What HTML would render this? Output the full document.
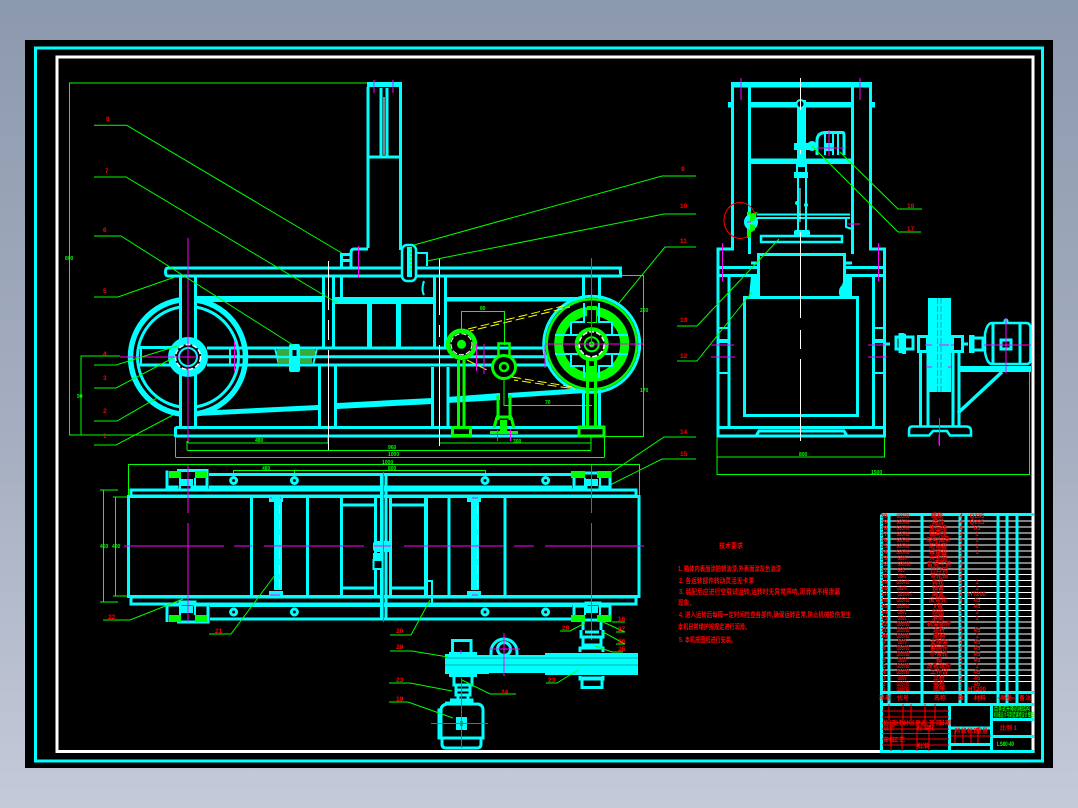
<!DOCTYPE html>
<html lang="zh">
<head>
<meta charset="utf-8">
<title>CAD drawing</title>
<style>
html,body{margin:0;padding:0;width:1078px;height:808px;overflow:hidden;background:linear-gradient(180deg,#8c99ad 0%,#a6afc1 55%,#c5cad9 100%)}
svg{position:absolute;left:0;top:0;display:block}
.c{fill:none;stroke:#0ff;stroke-width:3}
.t{fill:none;stroke:#0ff;stroke-width:2}
.f{fill:#0ff;stroke:none}
.g{fill:none;stroke:#0f0;stroke-width:1}
.l{fill:none;stroke:#0f0;stroke-width:3}
.lf{fill:#0f0;stroke:none}
.m{fill:none;stroke:#f0f;stroke-width:1}
.w{fill:none;stroke:#fff;stroke-width:1}
.y{fill:none;stroke:#ff0;stroke-width:1;stroke-dasharray:9 4}
text{font-family:"Liberation Sans","Noto Sans CJK SC",sans-serif;font-weight:700}
.r{fill:#f00;font-size:6.5px}
.d{fill:#0f0;font-size:5px}
.n{fill:#f00;font-size:7px;font-weight:700}
</style>
</head>
<body>
<svg width="1078" height="808" viewBox="0 0 1078 808" xmlns="http://www.w3.org/2000/svg">
<rect x="25" y="40" width="1028" height="728" fill="#000"/>
<rect x="35.5" y="48" width="1007" height="713" class="c"/>
<rect x="57" y="57" width="976" height="694.5" fill="none" stroke="#fff" stroke-width="3"/>

<!-- FRONT ELEVATION -->
<!-- dims -->
<path class="g" d="M367 83H69.5V435H174M120 356H81V435M188 443H328M188 443V437M328 443V437M440 443H591M187 441V450M187 450.500H591M591 437V450M175.500 457.500H604.500M175.500 437V457M604.500 437V457M620 275.500H643.500V436.500H605M504 367V405.500H592M461.500 344V311.500H504.500V345"/>
<text class="d" x="65" y="260">800</text><text class="d" x="77" y="398">90</text><text class="d" x="255" y="442">480</text><text class="d" x="388" y="449">960</text><text class="d" x="388" y="456">1000</text><text class="d" x="640" y="312">260</text><text class="d" x="640" y="392">170</text><text class="d" x="480" y="310">80</text><text class="d" x="545" y="404">70</text><text class="d" x="513" y="443">300</text>
<!-- column -->
<path class="c" d="M368 248V87M400.500 87V250M367 157H400M381 88V156M387 88V156"/>
<rect x="367" y="82" width="35" height="5" class="f"/>
<path class="c" d="M368 249H354Q351 249 351 253V267M341.500 267V254.500H350M341 260.500H350"/>
<!-- table -->
<path class="c" d="M622 268H168Q165.500 268 165.500 272Q165.500 276 168 276H622Q620.500 276 620.500 272Q620.500 268 618 268"/>
<!-- upper frame legs -->
<path class="c" d="M180.500 277V427M195.500 277V427M323.500 277V347M333.500 277V347M341.500 277V297M583.500 277V300M599.500 277V300"/>
<rect x="197" y="296" width="125" height="6" class="f"/>
<rect x="334" y="297" width="99" height="7" class="f"/>
<rect x="447" y="297" width="136" height="4.500" class="f"/>
<path class="c" d="M369.500 304V347M398.500 304V347"/>
<rect x="367" y="304" width="5" height="43" class="f"/><rect x="396" y="304" width="5" height="43" class="f"/>
<path class="c" d="M434.500 277V347M445.500 277V347"/>
<path class="t" d="M424 281Q421 290 424 295"/>
<!-- big wheel -->
<circle cx="188" cy="357" r="57.500" fill="none" stroke="#0ff" stroke-width="5.500"/>
<circle cx="188" cy="357" r="50.500" fill="none" stroke="#0ff" stroke-width="3"/>
<rect x="182" y="290" width="12" height="135" fill="#000"/>
<path class="c" d="M180.500 277V427M195.500 277V427"/>
<!-- rails -->
<path class="c" d="M207 348H570M207 356.800H576M207 365H570M139 347.500H172M139 365H172"/>
<path class="t" d="M141 347V365M230 348V365M238 348V365"/>
<!-- hub -->
<circle cx="188" cy="357" r="16.500" fill="#000" stroke="#0ff" stroke-width="7"/>
<circle cx="188" cy="357" r="12.500" fill="none" stroke="#fff" stroke-width="1.500" stroke-dasharray="5 2"/>
<circle cx="188" cy="357" r="9" fill="none" stroke="#0ff" stroke-width="2"/>
<!-- key block -->
<path d="M275 348H317L313 365H279Z" fill="#000" stroke="#0ff" stroke-width="2"/>
<path d="M277 349H315V355H277ZM278 358H312V364H278Z" fill="#3aa83a"/>
<path class="c" d="M276 356.800H316" stroke-width="2"/>
<rect x="289" y="344" width="11" height="28" rx="2" class="f"/>
<rect x="292.500" y="350" width="4" height="6" fill="#000"/>
<!-- lower legs -->
<path class="c" d="M319.500 366V427M335.500 366V427M432.500 367V427M448 367V427M583.500 367V427M599.500 367V427"/>
<!-- base -->
<path class="c" d="M175.500 427.500H604M175.500 436H604M175.500 427V437"/>
<!-- slant -->
<path d="M197 411L318 405V410L197 416Z" class="f"/>
<path d="M337 403L432 398V404L337 409Z" class="f"/>
<path d="M447 397L500 393V400L447 403Z" class="f"/>
<path d="M508 393L585 388V393L508 398Z" class="f"/>
<!-- right bolt -->
<rect x="402" y="245" width="14" height="36" rx="5" fill="#000" stroke="#0ff" stroke-width="2.500"/>
<rect x="407" y="247" width="5" height="30" fill="#0ff"/>
<path class="t" d="M416 253H427V266"/>
<path stroke="#0f0" stroke-width="1.500" stroke-dasharray="2 2" d="M411 248V272" fill="none"/>
<!-- small pulleys -->
<path class="l" d="M458.500 360V427M464 360V427M498 395V420M510 395V420"/>
<rect x="452.500" y="427.500" width="18" height="8" fill="none" stroke="#0f0" stroke-width="3"/>
<circle cx="461.500" cy="344.300" r="13.500" fill="#000" stroke="#0f0" stroke-width="4.500"/>
<circle cx="461.500" cy="344.300" r="10.500" fill="none" stroke="#fff" stroke-width="1" stroke-dasharray="5 2"/>
<circle cx="461.500" cy="344.300" r="4.500" class="lf"/>
<rect x="498.500" y="343.500" width="11" height="13" fill="none" stroke="#0f0" stroke-width="2.500"/>
<circle cx="504" cy="367" r="11.500" fill="#000" stroke="#0f0" stroke-width="3"/>
<circle cx="504" cy="367" r="4" fill="none" stroke="#0f0" stroke-width="2.500"/>
<path class="l" d="M497 417L494 428M511 417L514 428M496 417H512"/>
<rect x="500" y="420" width="7" height="12" class="lf"/>
<rect x="490" y="431" width="28" height="3" class="lf"/>
<!-- right pulley -->
<circle cx="591.700" cy="344.300" r="48" fill="none" stroke="#0ff" stroke-width="3"/>
<circle cx="591.700" cy="344.300" r="45" fill="#000" stroke="#0f0" stroke-width="2.500"/>
<circle cx="591.700" cy="344.300" r="33" fill="none" stroke="#0f0" stroke-width="9"/>
<path d="M587 306H597V323H587ZM587 366H597V380H587Z" class="lf"/>
<path d="M587 310H596V322H587Z" fill="#000"/>
<path class="t" d="M584 303V322H571V335M599 303V322H612V335M571 354V366H584V378M612 354V366H599V378"/>
<path class="t" d="M555 335H578M605 335H628M555 354H578M605 354H628"/>
<circle cx="591.700" cy="344.300" r="15" fill="#000" stroke="#0f0" stroke-width="4"/>
<circle cx="591.700" cy="344.300" r="12.500" fill="none" stroke="#fff" stroke-width="1.500" stroke-dasharray="5 2"/>
<circle cx="591.700" cy="344.300" r="7" fill="none" stroke="#0f0" stroke-width="2"/>
<circle cx="591.700" cy="344.300" r="3" class="lf"/>
<path class="l" d="M587.500 360V427M595.500 360V427"/>
<rect x="579" y="427" width="25" height="9" fill="none" stroke="#0f0" stroke-width="3"/>
<!-- belts -->
<path class="y" d="M468 329L567 305M467 360L487 370M512 377L573 387"/>
<path class="y" d="M470 331L570 307M514 380L575 389" stroke-dashoffset="5"/>
<!-- centers -->
<path class="m" d="M188 238V441M120 357H197M234.500 341V371M358.500 246V277M374 80V93M393 80V93M591.500 258V344M546 344H643M484 344V374M476.500 344V371M497.500 430V441M510.500 429V441M545 345V368"/>
<path class="w" d="M328.500 261V310M328.500 320V340M328.500 350V450M439.500 259V315M439.500 325V337M439.500 345V446M384 97V155"/>

<!-- left leaders -->
<path class="g" d="M94 125.300H126.700L341.700 253M94 177H126L337 303M94 236H121L293 345M94 297H118L175 277M94 365H116L177 346M94 388H116L173 358M94 421H117L157 398M94 445H116L173 415"/>
<text class="r" x="106" y="121">8</text><text class="r" x="105" y="173">7</text><text class="r" x="103" y="232">6</text><text class="r" x="103" y="293">5</text><text class="r" x="103" y="356">4</text><text class="r" x="103" y="380">3</text><text class="r" x="103" y="413">2</text><text class="r" x="103" y="438">1</text>
<path class="g" d="M696 176H662L414 245M696 214H664L427 261M696 247H665L619 303M696 437H664L612 472M696 459H662L610 485"/>
<text class="r" x="681" y="171">9</text><text class="r" x="680" y="208">10</text><text class="r" x="680" y="243">11</text><text class="r" x="680" y="434">14</text><text class="r" x="680" y="456">15</text>

<!-- SIDE VIEW -->
<rect x="731" y="82" width="141" height="5.500" class="f"/>
<path class="c" d="M732.500 85V249H718V436H884.500V249H870.500V85"/>
<path class="c" d="M749.500 87V254M852.500 87V254"/>
<rect x="751" y="102" width="100" height="5.500" class="f"/>
<rect x="728" y="102" width="4" height="5.500" class="f"/><rect x="871" y="102" width="4" height="5.500" class="f"/>
<rect x="751" y="158.500" width="100" height="5.500" class="f"/>
<rect x="797" y="100" width="9" height="67" class="f"/>
<circle cx="800.500" cy="104" r="4" fill="#000" stroke="#0ff" stroke-width="2"/>
<rect x="794" y="143" width="20" height="7" class="f"/>
<path class="c" d="M817 155V141Q817 133 825 132.500H843Q844 133 844 136V155"/>
<path class="t" d="M833 133V155M838 133V155M825 133V155"/>
<rect x="825" y="143" width="9" height="8" class="f"/>
<circle cx="812" cy="146" r="5" class="f"/>
<rect x="794" y="172" width="14" height="6" class="f"/>
<path class="t" d="M797 164V172M806 164V172M798 178V234M806 178V234"/>
<circle cx="797" cy="203" r="2" class="f"/><circle cx="806" cy="205" r="2" class="f"/>
<path class="t" d="M757 214.500H850M757 218H850"/>
<rect x="794" y="230" width="16" height="6" rx="2" class="f"/>
<rect x="761" y="236" width="81" height="6" fill="#000" stroke="#0ff" stroke-width="2.500"/>
<path class="c" d="M758.500 297V254.500H844.500V297"/>
<path class="c" d="M718 267.500H758M845 267.500H885M718 275.500H758M845 275.500H885M729 277V427M873.500 277V427"/>
<path class="c" d="M751 263H758M845 263H852"/>
<path class="f" d="M751 276H758V297H749ZM845 276H852V297H840Q837 290 842 285Z"/>
<rect x="744.500" y="297.500" width="113" height="118" class="c"/>
<path class="c" d="M718 427.500H884M718 436H756L759 431H844L847 436"/>
<path class="t" d="M717 328H729M717 342H729M717 373H729M873 328H885M873 342H885M873 373H885M717 340H729M873 340H885"/>
<path d="M747 212L751 211V238L747 238Z" class="lf"/>
<ellipse cx="751" cy="222" rx="7" ry="8" class="f"/>
<path d="M750 214L757 212L755 220L750 222ZM750 224L755 225V230L750 233Z" class="lf"/>
<path d="M755 214A16 18 0 1 0 748 236" fill="none" stroke="#f00" stroke-width="1"/>
<path class="t" d="M846 217V227L852 229"/>
<path class="m" d="M741 78V100M860 78V100M722.500 243V281M878.500 243V281M711 345H734M711 357H735M868 345H885M868 357H887M848 224H860M829 130V156M817 148H844M751 222H747"/>
<path class="w" d="M800.500 78V110M800.500 150V154M800 188V222M800.500 232V318M800.500 330V349M800.500 359V441"/>
<path class="g" d="M717 437V457H884.500V437M717 457V474.500H1029.500V372"/>
<text class="d" x="799" y="456">800</text><text class="d" x="871" y="474">1500</text>
<path class="g" d="M922 209H898L840 152M921 232H898L812 146M677 326H697L779 239M677 361H697L752 292"/>
<text class="r" x="907" y="208">18</text><text class="r" x="907" y="231">17</text><text class="r" x="680" y="322">13</text><text class="r" x="680" y="358">12</text>

<!-- flywheel & motor -->
<rect x="928" y="298" width="23" height="94" class="f"/>
<path stroke="#08a" stroke-width=".7" fill="none" stroke-dasharray="6 2" d="M937.500 298V392M941 298V392"/>
<path class="c" d="M920.500 353V426M928 353V426M953 353V426M959 353V426"/>
<path d="M912 426.500H966Q971 426.500 971 431V435.500H950L947 431H933L929 435.500H909V431Q909 426.500 912 426.500Z" fill="none" stroke="#0ff" stroke-width="2.500"/>
<rect x="918.500" y="336.500" width="9" height="15" class="c"/><rect x="952.500" y="336.500" width="10" height="15" class="c"/>
<path class="c" d="M886 344H890M896 337H913V349H896ZM900 333V353M903 333V353M963 344H968M971 338H983V350H971ZM973 335V353"/>
<path class="f" d="M902 334H906V354H902ZM969 335H973V353H969Z"/>
<path class="f" d="M958 366H1031V372H958Z"/>
<path d="M1002 372L958 413" fill="none" stroke="#0ff" stroke-width="3.500"/>
<path d="M992 323H1026Q1030.500 323 1030.500 328V360Q1030.500 364 1026 364H992Q987 364 985 352V334Q987 323 992 323Z" fill="none" stroke="#0ff" stroke-width="2.500"/>
<path class="c" d="M993 323V364M1020 323V364"/>
<rect x="1001" y="340" width="10" height="9" fill="none" stroke="#0ff" stroke-width="3"/>
<circle cx="1006" cy="321" r="2.500" class="f"/>
<path class="m" d="M1006 318V373M984 345H1031M939 435V445M939 345H949M925 345H932M951 345H954M926 367H932M948 367H952M939.500 418V446"/>

<!-- PLAN VIEW -->
<path class="g" d="M128.500 495V464.500H639.500V495M175.500 450V457M604.500 450V457M233.500 478V470.500H485.500V478M294.500 478V470.500M103.500 490V602M100 490H118M100 602H118M115.500 497V596M113 497H128M113 596H128"/>
<text class="d" x="382" y="464">1000</text><text class="d" x="262" y="470">480</text><text class="d" x="388" y="470">800</text><text class="d" x="100" y="548">450</text><text class="d" x="112" y="548">400</text>
<path class="c" d="M209 474.500H572M209 487H572M210 605.500H572M210 619H572"/>
<rect x="128.500" y="496.500" width="510.500" height="100" class="c"/>
<rect x="131" y="490" width="505" height="6" class="c"/>
<rect x="131" y="597" width="505" height="7" class="c"/>
<path class="c" d="M251.500 496V597M307.500 496V597M449 496V597M505 496V597"/>
<rect x="274" y="500" width="8" height="90" class="f"/><rect x="471" y="500" width="8" height="90" class="f"/>
<rect x="269" y="497" width="14" height="5" class="f"/><rect x="269" y="591" width="14" height="5" class="f"/>
<rect x="467" y="497" width="14" height="5" class="f"/><rect x="467" y="591" width="14" height="5" class="f"/>
<path stroke="#ff0" stroke-width="1" fill="none" stroke-dasharray="9 6" d="M279.500 505V588M477.500 505V588"/>
<rect x="341.500" y="496" width="34" height="101" class="c"/><rect x="390.500" y="496" width="36" height="101" class="c"/>
<path class="c" d="M343 505H375M343 588H375M392 505H425M392 588H425"/>
<rect x="424" y="496" width="4" height="100" class="f"/>
<path class="c" d="M381.500 473V620M386 473V620"/>
<path class="t" d="M426 581H432V604"/>
<rect x="373" y="541" width="19" height="11" rx="3" class="f"/>
<rect x="373" y="553" width="10" height="6" class="f"/>
<rect x="373.500" y="560" width="9" height="9" fill="#000" stroke="#0ff" stroke-width="2"/>
<g fill="#000" stroke="#0ff" stroke-width="3">
<circle cx="233.600" cy="480.500" r="3"/><circle cx="294.400" cy="480.500" r="3"/><circle cx="485" cy="480.500" r="3"/><circle cx="545.600" cy="480.500" r="3"/>
<circle cx="233.600" cy="612" r="3"/><circle cx="294.400" cy="612" r="3"/><circle cx="485" cy="612" r="3"/><circle cx="545.600" cy="612" r="3"/>
</g>
<!-- bearings -->
<path class="c" d="M167 470.500V487H177V490H192V487H207V470.500H177M167 622V605H180V602H195V605H208V622H177"/>
<path class="c" d="M574 487V473H610V487H600V490H586V487ZM574 606V620H610V606H600V603H586V606Z"/>
<path class="lf" d="M169 471H181V478H169ZM195 471H207V478H195ZM571 471H585V478H571ZM597 471H611V478H597ZM169 615H181V622H169ZM195 615H207V622H195ZM571 615H585V622H571ZM597 615H611V622H597Z"/>
<path class="t" d="M180 478V490M195 478V490M585 478V490M600 478V490M180 603V615M195 603V615M585 603V615M600 603V615"/>
<path class="f" d="M181 479H193V486H181ZM586 479H598V486H586ZM181 606H193V613H181ZM586 606H598V613H586Z"/>
<path class="m" d="M124 546H224M234 546H252M264 546H364M374 546H391M404 546H504M514 546H534M545 546H644M188 465V513M188 523V622M591.500 465V513M591.500 523V640M383.500 472V622M270 498H272M281 498H280M472 498H478M270 595H280M472 595H478"/>
<path class="g" d="M103 620H130L183 599M209 634H231L275 575M390 635H411L430 600"/>
<text class="r" x="108" y="619">22</text><text class="r" x="215" y="633">21</text><text class="r" x="396" y="633">20</text>

<!-- BOTTOM DETAIL -->
<path class="c" d="M452.500 652V640.500H471V652"/>
<path class="c" d="M491 655V652A13 13 0 0 1 517 652V655"/>
<circle cx="504" cy="649" r="6.500" fill="#000" stroke="#0ff" stroke-width="3"/>
<path class="f" d="M445 654H449V652H477V655H545V653H638V675H545V673H489V674H477V677H449V674H445Z"/>
<path stroke="#098" stroke-width=".7" fill="none" d="M445 658H638M445 665H638"/>
<path class="c" d="M454 675V685H472V675M456 685V695H470V685M455 690H471M458 695V700H468V695"/>
<path d="M441 710Q441 705 447 704H478Q483 705 483 710V738H439V710Z" fill="none" stroke="#0ff" stroke-width="3"/>
<path d="M441 709V738M442 738V744Q442 748 446 748H477Q481 748 481 744V738M450 700H472V703H445" fill="none" stroke="#0ff" stroke-width="3"/>
<rect x="456" y="717" width="11" height="13" class="f"/>
<rect x="460" y="721" width="3" height="5" fill="#0a8"/>
<path class="c" d="M581 630V637H603V630M583 622V630M601 622V630M583 637V645H601V637M585 632H599M580 652V648H603V652M580 676V679H603V676"/>
<rect x="582" y="678" width="20" height="9.500" class="c"/>
<path class="m" d="M504 633V676M489 649H520M461.500 678V748M431 723.500H488M461 650V654"/>
<path class="g" d="M560 631H570L585 623M612 622H625M616 632H625L603 622M616 644H625L603 632M595 646L612 652H623M390 651H412L448 657M389 683H410L452 691M389 702H408L453 718M516 694H490L462 680M546 683H557L578 670"/>
<text class="r" x="562" y="630">28</text><text class="r" x="618" y="621">16</text><text class="r" x="618" y="631">27</text><text class="r" x="618" y="643">26</text><text class="r" x="618" y="651">25</text>
<text class="r" x="396" y="649">29</text><text class="r" x="396" y="682">23</text><text class="r" x="396" y="701">19</text><text class="r" x="501" y="694">24</text><text class="r" x="548" y="682">23</text>

<!-- TECH NOTES -->
<text class="n" x="719" y="548" textLength="24" lengthAdjust="spacingAndGlyphs">技术要求</text>
<text class="n" x="678" y="571" textLength="103" lengthAdjust="spacingAndGlyphs">1. 箱体内表面涂防锈油漆,外表面涂灰色油漆</text>
<text class="n" x="679" y="583" textLength="75" lengthAdjust="spacingAndGlyphs">2. 各运转部件转动灵活无卡滞</text>
<text class="n" x="679" y="594" textLength="161" lengthAdjust="spacingAndGlyphs">3. 装配后应进行空载试运转,运转时无异常声响,润滑油不得渗漏</text>
<text class="n" x="678" y="605" textLength="17" lengthAdjust="spacingAndGlyphs">现象。</text>
<text class="n" x="679" y="617" textLength="172" lengthAdjust="spacingAndGlyphs">4. 进入运转后每隔一定时间检查各部件,确保运转正常,防止机械损伤发生</text>
<text class="n" x="678" y="629" textLength="72" lengthAdjust="spacingAndGlyphs">本机日常维护按规定进行润滑。</text>
<text class="n" x="679" y="642" textLength="57" lengthAdjust="spacingAndGlyphs">5. 本机按图纸进行安装。</text>

<!-- TITLE BLOCK -->
<g stroke="#fff" stroke-width="1" fill="none">
<path d="M881 521H1033M881 527H1033M881 533H1033M881 539H1033M881 545H1033M881 551H1033M881 557H1033M881 563H1033M881 569H1033M881 574.500H1033M881 580.500H1033M881 586.500H1033M881 592.500H1033M881 598.500H1033M881 604.500H1033M881 610.500H1033M881 616.500H1033M881 622H1033M881 628H1033M881 634H1033M881 640H1033M881 646H1033M881 652H1033M881 658H1033M881 664H1033M881 670H1033M881 675.500H1033M881 681.500H1033"/>
</g>
<path class="c" d="M881.500 514.500H1034M881.500 514.500V751.500H1034M889 515V704M922 515V704M960 515V704M966 515V704M998 515V704M1007 515V704M1017 515V704M881 692.500H1034M881 704.500H1034M949.500 704V752M991.500 704V752M992 719.500H1034M992 736.500H1034M950 728H991M950 744.500H991"/>
<g class="r" style="font-size:6px" text-anchor="middle">
<text x="884" y="518">30</text><text x="903" y="518" textLength="13" lengthAdjust="spacingAndGlyphs">GB5783</text><text x="937" y="518">螺栓</text><text x="961" y="518">4</text><text x="977" y="518">Q235</text>
<text x="884" y="524">29</text><text x="903" y="524" textLength="13" lengthAdjust="spacingAndGlyphs">GB5783</text><text x="938" y="524">螺母</text><text x="961" y="524">4</text><text x="977" y="524">Q235</text>
<text x="884" y="530">28</text><text x="903" y="530" textLength="13" lengthAdjust="spacingAndGlyphs">GB5783</text><text x="938" y="530">垫圈组</text><text x="961" y="530">8</text><text x="977" y="530">65</text>
<text x="884" y="536">27</text><text x="903" y="536" textLength="13" lengthAdjust="spacingAndGlyphs">GB5783</text><text x="938" y="536">轴承座</text><text x="961" y="536">2</text><text x="977" y="536">1</text>
<text x="884" y="542">26</text><text x="903" y="542" textLength="13" lengthAdjust="spacingAndGlyphs">GB5783</text><text x="938" y="542">深沟轴承</text><text x="961" y="542">2</text><text x="977" y="542">1</text>
<text x="884" y="548">25</text><text x="903" y="548" textLength="13" lengthAdjust="spacingAndGlyphs">GB5783</text><text x="938" y="548">联轴器</text><text x="961" y="548">2</text><text x="977" y="548">1</text>
<text x="884" y="554">24</text><text x="903" y="554" textLength="13" lengthAdjust="spacingAndGlyphs">GB5783</text><text x="938" y="554">减速器</text><text x="961" y="554">1</text><text x="977" y="554">1</text>
<text x="884" y="560">23</text><text x="902" y="560" textLength="9" lengthAdjust="spacingAndGlyphs">GB96</text><text x="938" y="560">大垫圈</text><text x="961" y="560">2</text>
<text x="884" y="566">22</text><text x="904" y="566" textLength="13" lengthAdjust="spacingAndGlyphs">GB1096</text><text x="939" y="566">普通平键</text><text x="961" y="566">4</text>
<text x="884" y="572">21</text><text x="901" y="572" textLength="7" lengthAdjust="spacingAndGlyphs">GB5</text><text x="939" y="572">开口销</text><text x="961" y="572">2</text>
<text x="884" y="578">20</text><text x="902" y="578" textLength="9" lengthAdjust="spacingAndGlyphs">GB41</text><text x="939" y="578">带轮轴</text><text x="961" y="578">2</text>
<text x="884" y="584">19</text><text x="903" y="584" textLength="13" lengthAdjust="spacingAndGlyphs">GB5783</text><text x="938" y="584">齿轮</text><text x="961" y="584">2</text><text x="977" y="584">1</text>
<text x="884" y="590">18</text><text x="902" y="590" textLength="10" lengthAdjust="spacingAndGlyphs">GB276</text><text x="938" y="590">轴套</text><text x="961" y="590">2</text><text x="977" y="590">1</text>
<text x="884" y="596">17</text><text x="905" y="596" textLength="15" lengthAdjust="spacingAndGlyphs">GB1096-7</text><text x="938" y="596">端盖</text><text x="961" y="596">2</text><text x="977" y="596">HT200</text>
<text x="884" y="602">16</text><text x="903" y="602" textLength="13" lengthAdjust="spacingAndGlyphs">GB5783</text><text x="938" y="602">皮带轮</text><text x="961" y="602">4</text><text x="977" y="602">45</text>
<text x="884" y="608">15</text><text x="903" y="608" textLength="13" lengthAdjust="spacingAndGlyphs">GB5783</text><text x="938" y="608">V带</text><text x="961" y="608">1</text><text x="977" y="608">45</text>
<text x="884" y="614">14</text><text x="902" y="614" textLength="9" lengthAdjust="spacingAndGlyphs">GB91</text><text x="938" y="614">挡圈</text><text x="961" y="614">1</text><text x="977" y="614">1</text>
<text x="884" y="620">13</text><text x="902" y="620" textLength="9" lengthAdjust="spacingAndGlyphs">GB91</text><text x="938" y="620">滚筒</text><text x="961" y="620">1</text><text x="977" y="620">1</text>
<text x="884" y="626">12</text><text x="903" y="626" textLength="13" lengthAdjust="spacingAndGlyphs">GB5783</text><text x="939" y="626">机架部件</text><text x="961" y="626">1</text>
<text x="884" y="632">11</text><text x="903" y="632" textLength="13" lengthAdjust="spacingAndGlyphs">GB5783</text><text x="939" y="632">连杆</text><text x="961" y="632">2</text><text x="977" y="632">45</text>
<text x="884" y="638">10</text><text x="903" y="638" textLength="13" lengthAdjust="spacingAndGlyphs">GB5783</text><text x="939" y="638">曲柄</text><text x="961" y="638">4</text><text x="977" y="638">1</text>
<text x="884" y="644">9</text><text x="902" y="644" textLength="9" lengthAdjust="spacingAndGlyphs">GB70</text><text x="939" y="644">支撑架</text><text x="961" y="644">2</text><text x="977" y="644">45</text>
<text x="884" y="650">8</text><text x="903" y="650" textLength="13" lengthAdjust="spacingAndGlyphs">GB5783</text><text x="939" y="650">紧固件</text><text x="961" y="650">4</text><text x="977" y="650">45</text>
<text x="884" y="656">7</text><text x="903" y="656" textLength="13" lengthAdjust="spacingAndGlyphs">GB5783</text><text x="939" y="656">小带轮</text><text x="961" y="656">1</text><text x="977" y="656">45</text>
<text x="884" y="662">6</text><text x="902" y="662" textLength="9" lengthAdjust="spacingAndGlyphs">GB93</text><text x="939" y="662">轴</text><text x="961" y="662">2</text><text x="977" y="662">45</text>
<text x="884" y="668">5</text><text x="903" y="668" textLength="13" lengthAdjust="spacingAndGlyphs">GB5783</text><text x="939" y="668">压板组件</text><text x="961" y="668">1</text><text x="977" y="668">1</text>
<text x="884" y="674">4</text><text x="903" y="674" textLength="13" lengthAdjust="spacingAndGlyphs">GB5783</text><text x="939" y="674">工作台</text><text x="961" y="674">1</text><text x="977" y="674">45</text>
<text x="884" y="680">3</text><text x="902" y="680" textLength="9" lengthAdjust="spacingAndGlyphs">GB93</text><text x="939" y="680">立柱</text><text x="961" y="680">2</text><text x="977" y="680">45</text>
<text x="884" y="686">2</text><text x="903" y="686" textLength="13" lengthAdjust="spacingAndGlyphs">GB5783</text><text x="939" y="686">电机</text><text x="961" y="686">1</text><text x="977" y="686">45</text>
<text x="884" y="691">1</text><text x="903" y="691" textLength="13" lengthAdjust="spacingAndGlyphs">GB5783</text><text x="939" y="691">底座</text><text x="961" y="691">1</text><text x="977" y="691">HT200</text>
<text x="885" y="700">序号</text><text x="903" y="700">代号</text><text x="940" y="700">名称</text><text x="961" y="700">数</text><text x="980" y="700">材料</text><text x="1006" y="700">单重</text><text x="1025" y="700">备注</text>
</g>
<!-- lower grid -->
<path stroke="#f00" stroke-width="1" fill="none" d="M882 711H949M882 717H949M882 723H949M882 729H949M882 733.500H949M882 739H949M882 745H949M889 704V720M903 704V720M911 704V720M925 704V720M935 704V720M891 725V751M902 725V751M917 725V751M929 725V751M951 736H991M955 729V743M963 729V743M971 729V743M978 729V743M998 698H1016"/>
<g class="r" style="font-size:6px">
<text x="883" y="725">标记</text><text x="893" y="725">处数</text><text x="903" y="725">分区</text><text x="915" y="725">更改</text><text x="929" y="725">签名</text><text x="939" y="725">日期</text>
<text x="883" y="730">设计</text><text x="917" y="730">标准化</text>
<text x="883" y="742">审核</text><text x="893" y="742">工艺</text><text x="917" y="748">批准</text>
<text x="955" y="733">阶段标记</text><text x="976" y="733">重量</text>
</g>
<text x="994" y="711" fill="#0f0" style="font-size:6px" textLength="36" lengthAdjust="spacingAndGlyphs">齿条式升降机械结构</text>
<text x="994" y="717" fill="#0f0" style="font-size:6px" textLength="40" lengthAdjust="spacingAndGlyphs">机械设计与制造课程设计图纸</text>
<text x="1000" y="730" fill="#f00" style="font-size:6px">比例 1</text>
<text x="997" y="746" fill="#0f0" style="font-size:6px" textLength="17" lengthAdjust="spacingAndGlyphs">LS80-40</text>
</svg>
</body>
</html>
